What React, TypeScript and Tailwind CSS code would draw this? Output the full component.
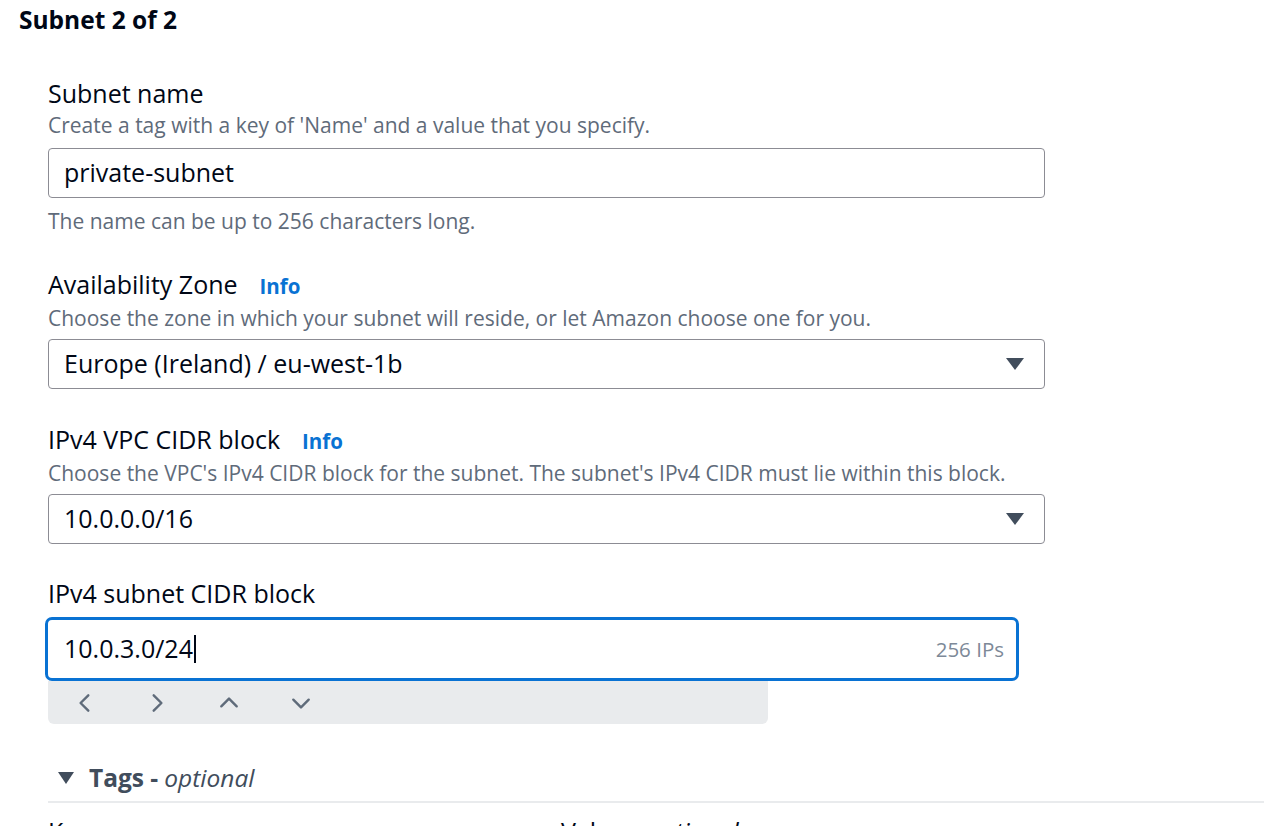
import React from "react";

const font = { fontFamily: '"Open Sans", "Noto Sans", sans-serif' };

function Caret() {
  return (
    <svg width="20" height="14" viewBox="0 0 20 14" className="shrink-0">
      <path d="M1 1h18l-9 12z" fill="#414d5c" />
    </svg>
  );
}

function Chev({ d }: { d: string }) {
  return (
    <svg width="22" height="22" viewBox="0 0 20 20">
      <path d={d} fill="none" stroke="#5f6b7a" strokeWidth="2.2" strokeLinecap="round" strokeLinejoin="round" />
    </svg>
  );
}

function Label({ text, info }: { text: string; info?: boolean }) {
  return (
    <div className="flex items-baseline text-[25px] leading-[30px] text-[#000716]">
      <span>{text}</span>
      {info && <span className="ml-[22px] text-[20.5px] font-bold text-[#0972d3]">Info</span>}
    </div>
  );
}

function Desc({ text }: { text: string }) {
  return <div className="text-[21px] leading-[26px] text-[#5f6b7a]">{text}</div>;
}

export default function App() {
  return (
    <div className="w-[1264px] h-[826px] overflow-hidden bg-white" style={font}>
      <div className="pl-[19px] pt-[5px] text-[24.5px] leading-[30px] font-bold text-[#000716]">Subnet 2 of 2</div>
      <div className="pl-[48px] pt-[43px]">
        <Label text="Subnet name" />
        <div className="mt-[4px]">
          <Desc text="Create a tag with a key of 'Name' and a value that you specify." />
        </div>
        <div className="mt-[10px] w-[997px] h-[50px] border border-[#8c8c94] rounded-[4px] flex items-center px-[15px] text-[25px] text-[#000716]">
          private-subnet
        </div>
        <div className="mt-[10px]">
          <Desc text="The name can be up to 256 characters long." />
        </div>

        <div className="mt-[35px]">
          <Label text="Availability Zone" info />
        </div>
        <div className="mt-[4px]">
          <Desc text="Choose the zone in which your subnet will reside, or let Amazon choose one for you." />
        </div>
        <div className="mt-[8px] w-[997px] h-[50px] border border-[#8c8c94] rounded-[4px] flex items-center justify-between pl-[15px] pr-[19px] text-[25px] text-[#000716]">
          <span>Europe (Ireland) / eu-west-1b</span>
          <Caret />
        </div>

        <div className="mt-[35px]">
          <Label text="IPv4 VPC CIDR block" info />
        </div>
        <div className="mt-[4px]">
          <Desc text="Choose the VPC's IPv4 CIDR block for the subnet. The subnet's IPv4 CIDR must lie within this block." />
        </div>
        <div className="mt-[8px] w-[997px] h-[50px] border border-[#8c8c94] rounded-[4px] flex items-center justify-between pl-[15px] pr-[19px] text-[25px] text-[#000716]">
          <span>10.0.0.0/16</span>
          <Caret />
        </div>

        <div className="mt-[34px]">
          <Label text="IPv4 subnet CIDR block" />
        </div>
        <div className="mt-[9px] -ml-[3px] w-[974px] h-[64px] border-[3px] border-[#0972d3] rounded-[7px] flex items-center justify-between pl-[16px] pr-[12px]">
          <span className="flex items-center text-[25px] text-[#000716]">
            10.0.3.0/24
            <span className="inline-block w-[2px] h-[28px] bg-[#000716] ml-[1px]" />
          </span>
          <span className="text-[20.5px] text-[#7d8998]">256 IPs</span>
        </div>
        <div className="w-[720px] h-[43px] bg-[#e9ebed] rounded-b-[6px] flex items-center pl-[26px] gap-[50px]">
          <Chev d="M13 3l-7 7 7 7" />
          <Chev d="M7 3l7 7-7 7" />
          <Chev d="M3 13l7-7 7 7" />
          <Chev d="M3 7l7 7 7-7" />
        </div>

        <div className="mt-[39px] flex items-center h-[30px]">
          <svg width="18" height="14" viewBox="0 0 18 14" className="ml-[9px]">
            <path d="M1 1h16l-8 12z" fill="#414d5c" />
          </svg>
          <span className="ml-[14px] text-[24.5px] font-bold text-[#414d5c]">Tags - </span>
          <span className="ml-[6px] text-[24.5px] italic text-[#414d5c]">optional</span>
        </div>
        <div className="mt-[8px] h-[2px] bg-[#e9ebed]" />
        <div className="mt-[13px] flex text-[25px] leading-[30px] text-[#000716]">
          <span className="w-[513px]">Key</span>
          <span>
            Value - <span className="italic">optional</span>
          </span>
        </div>
      </div>
    </div>
  );
}
